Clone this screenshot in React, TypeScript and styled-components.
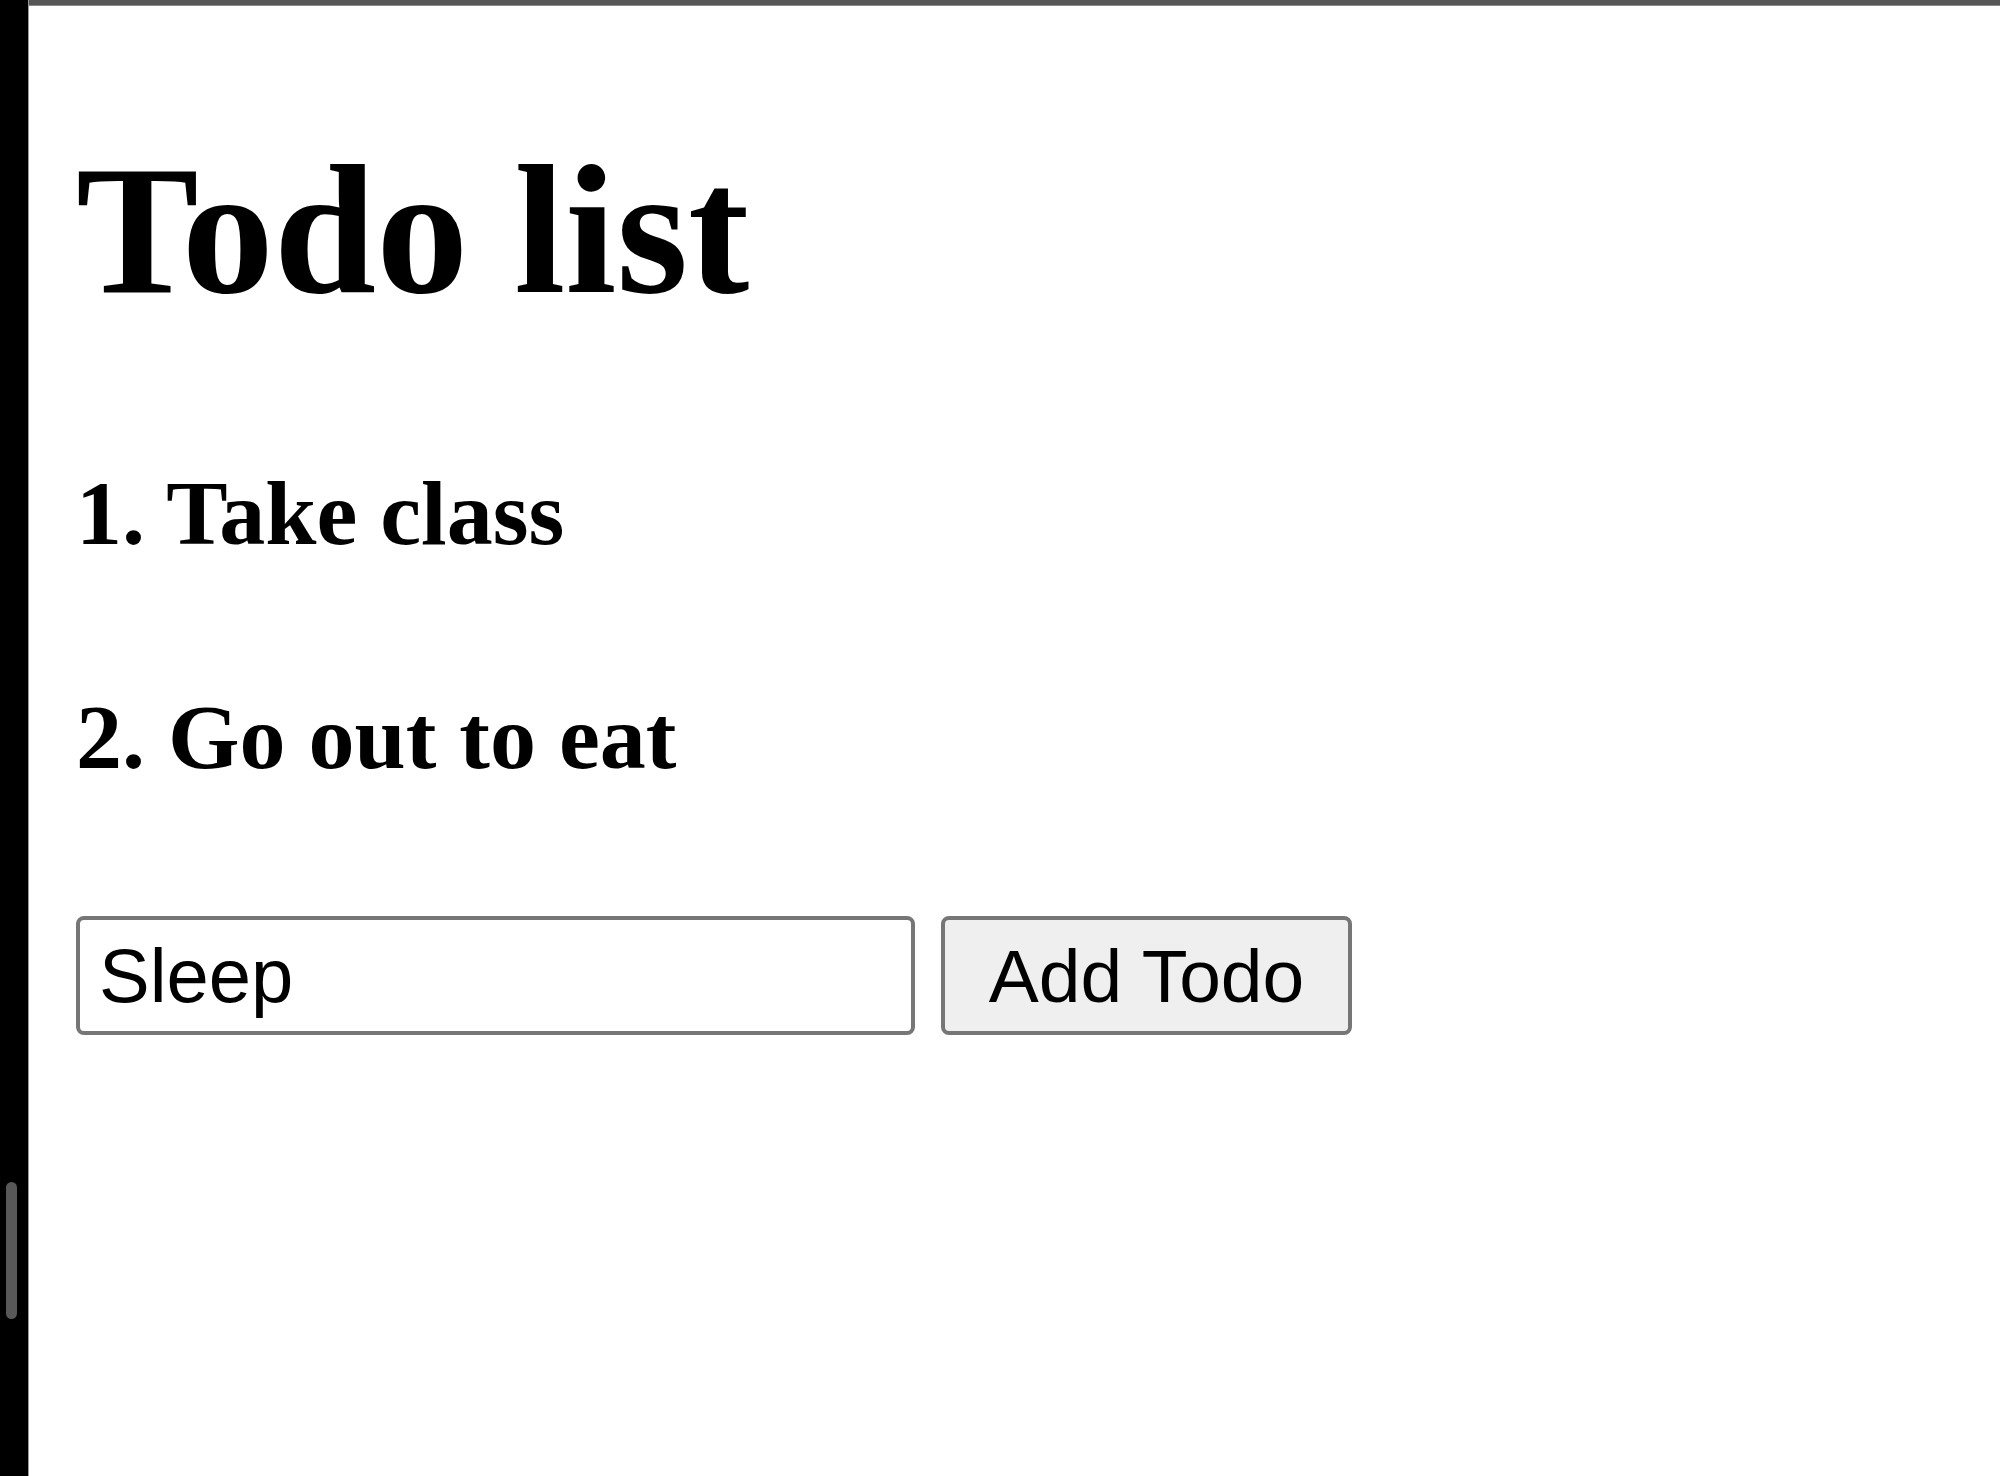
import React, { useState } from "react";
import styled, { createGlobalStyle } from "styled-components";

const Global = createGlobalStyle`
  html, body { margin: 0; padding: 0; background: #ffffff; }
  body { font-family: "Liberation Serif", "Times New Roman", serif; color: #000; }
  #root { min-height: 100vh; }
`;

const Page = styled.div`
  display: flex;
  min-height: 100vh;
`;

const Rail = styled.div`
  box-sizing: border-box;
  width: 29px;
  flex: 0 0 29px;
  background: #000;
  border-right: 1px solid #9a9a9a;
  display: flex;
  flex-direction: column;
  padding-top: 1182px;
  padding-left: 6px;
`;

const Thumb = styled.div`
  width: 11px;
  height: 137px;
  border-radius: 6px;
  background: #585858;
`;

const Main = styled.div`
  flex: 1;
  display: flex;
  flex-direction: column;
`;

const TopBar = styled.div`
  height: 5px;
  background: #565656;
  border-bottom: 1px solid #8a8a8a;
`;

const Content = styled.div`
  display: flex;
  flex-direction: column;
  align-items: flex-start;
  padding: 119px 0 0 47px;
`;

const Title = styled.h1`
  margin: 0 0 124px;
  font-family: "Liberation Serif", "Times New Roman", serif;
  font-weight: 700;
  font-size: 184px;
  line-height: 1.15;
`;

const Items = styled.div`
  display: flex;
  flex-direction: column;
  gap: 119px;
`;

const Item = styled.h4`
  margin: 0;
  font-family: "Liberation Serif", "Times New Roman", serif;
  font-weight: 700;
  font-size: 92px;
  line-height: 1.15;
`;

const Form = styled.form`
  display: flex;
  gap: 26px;
  margin-top: 125px;
`;

const TextInput = styled.input`
  box-sizing: border-box;
  width: 839px;
  height: 119px;
  border: 4px solid #767676;
  border-radius: 8px;
  padding: 0 19px;
  font-family: "Liberation Sans", Arial, sans-serif;
  font-size: 76px;
  color: #000;
  background: #fff;
  outline: none;
`;

const Button = styled.button`
  box-sizing: border-box;
  width: 411px;
  height: 119px;
  border: 4px solid #767676;
  border-radius: 8px;
  background: #efefef;
  font-family: "Liberation Sans", Arial, sans-serif;
  font-size: 75px;
  color: #000;
  padding: 0;
  cursor: pointer;
`;

export default function App() {
  const [todos, setTodos] = useState<string[]>(["Take class", "Go out to eat"]);
  const [text, setText] = useState("Sleep");

  return (
    <>
      <Global />
      <Page>
        <Rail>
          <Thumb />
        </Rail>
        <Main>
          <TopBar />
          <Content>
            <Title>Todo list</Title>
            <Items>
              {todos.map((t, i) => (
                <Item key={i}>
                  {i + 1}. {t}
                </Item>
              ))}
            </Items>
            <Form
              onSubmit={(e) => {
                e.preventDefault();
                if (text.trim()) {
                  setTodos([...todos, text.trim()]);
                  setText("");
                }
              }}
            >
              <TextInput value={text} onChange={(e) => setText(e.target.value)} />
              <Button type="submit">Add Todo</Button>
            </Form>
          </Content>
        </Main>
      </Page>
    </>
  );
}
